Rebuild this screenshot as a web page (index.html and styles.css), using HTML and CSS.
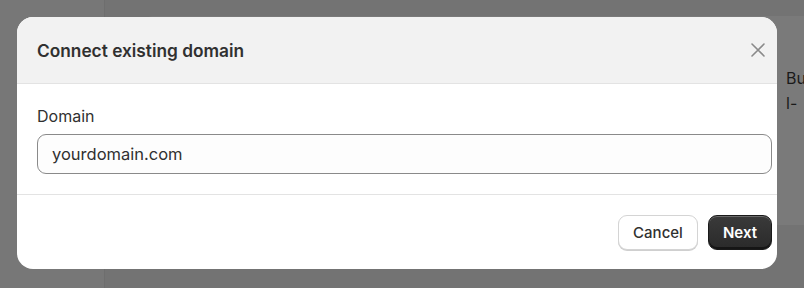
FILE: index.html
```html
<!DOCTYPE html>
<html>
<head>
<meta charset="utf-8">
<link rel="stylesheet" href="styles.css">
</head>
<body>
<div class="app">
  <aside class="sidebar"></aside>
  <main class="main">
    <div class="card">
      <div class="card-text">
        <span>Bu</span>
        <span>l-</span>
      </div>
    </div>
  </main>
</div>
<div class="modal">
  <div class="modal-header">
    <h2 class="modal-title">Connect existing domain</h2>
    <button class="close" aria-label="Close">
      <svg width="20" height="20" viewBox="0 0 20 20"><path d="M4 4 L16 16 M16 4 L4 16" stroke="#8a8a8a" stroke-width="1.6" stroke-linecap="round" fill="none"/></svg>
    </button>
  </div>
  <div class="modal-body">
    <label class="label">Domain</label>
    <div class="input">yourdomain.com</div>
  </div>
  <div class="modal-footer">
    <button class="btn btn-secondary">Cancel</button>
    <button class="btn btn-primary">Next</button>
  </div>
</div>
</body>
</html>
```

FILE: styles.css
```css
* { box-sizing: border-box; }
html, body { margin: 0; padding: 0; }
body {
  width: 804px;
  height: 288px;
  overflow: hidden;
  font-family: Inter, "Noto Sans", sans-serif;
  position: relative;
  background: #737373;
}
.app {
  display: flex;
  height: 288px;
}
.sidebar {
  width: 105px;
  background: #777777;
  border-right: 1px solid #6e6e6e;
}
.main {
  flex: 1;
  background: #737373;
  padding: 16px 0 0 41px;
}
.card {
  height: 209px;
  background: #7a7a7a;
  border-top-left-radius: 6px;
  display: flex;
  justify-content: flex-end;
}
.card-text {
  display: flex;
  flex-direction: column;
  width: 18px;
  padding-top: 50px;
  font-size: 16px;
  line-height: 25px;
  color: #1a1a1a;
  overflow: hidden;
  white-space: nowrap;
}
.modal {
  position: absolute;
  left: 17px;
  top: 17px;
  width: 760px;
  height: 252px;
  background: #ffffff;
  border-radius: 16px;
  overflow: hidden;
  display: flex;
  flex-direction: column;
}
.modal-header {
  height: 67px;
  background: #f2f2f2;
  border-bottom: 1px solid #e3e3e3;
  display: flex;
  align-items: center;
  justify-content: space-between;
  padding: 0 3px 0 20px;
}
.modal-title {
  margin: 0;
  font-size: 17.3px;
  font-weight: 600;
  color: #303030;
}
.close {
  width: 32px;
  height: 32px;
  border: none;
  background: transparent;
  padding: 0;
  display: flex;
  align-items: center;
  justify-content: center;
}
.modal-body {
  padding: 23px 5px 20px 20px;
  border-bottom: 1px solid #e3e3e3;
  display: flex;
  flex-direction: column;
  gap: 9px;
}
.label {
  font-size: 16px;
  line-height: 18px;
  color: #303030;
}
.input {
  height: 40px;
  border: 1px solid #8a8a8a;
  border-radius: 9px;
  background: #fdfdfd;
  padding: 0 14px;
  display: flex;
  align-items: center;
  font-size: 16.5px;
  color: #303030;
}
.modal-footer {
  flex: 1;
  display: flex;
  justify-content: flex-end;
  align-items: center;
  gap: 10px;
  padding: 0 5px 0 20px;
}
.btn {
  height: 35px;
  border-radius: 9px;
  font-family: inherit;
  font-size: 15px;
  font-weight: 600;
  padding: 0 12px;
  cursor: pointer;
}
.btn-secondary {
  width: 80px;
  background: #ffffff;
  color: #303030;
  border: 1px solid #d4d4d4;
  box-shadow: 0 1px 0 #cfcfcf;
  font-weight: 550;
}
.btn-primary {
  width: 64px;
  background: linear-gradient(#3a3a3a, #2a2a2a);
  color: #ffffff;
  border: 1px solid #1a1a1a;
  box-shadow: inset 0 1px 0 rgba(255,255,255,0.25), inset 0 -2px 0 rgba(0,0,0,0.5);
}
```
